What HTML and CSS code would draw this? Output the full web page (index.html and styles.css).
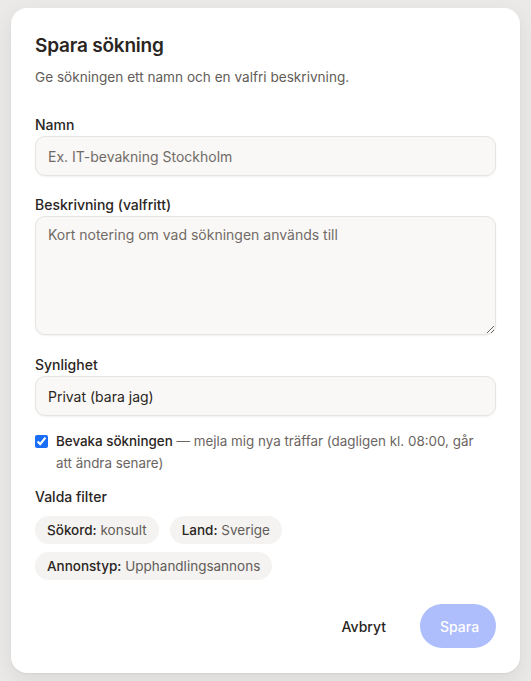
FILE: index.html
```html
<!DOCTYPE html>
<html lang="sv">
<head>
<meta charset="utf-8">
<title>Spara sökning</title>
<link rel="stylesheet" href="styles.css">
</head>
<body>
<div class="backdrop">
  <div class="dialog" role="dialog" aria-labelledby="dlg-title">
    <h2 id="dlg-title" class="title">Spara sökning</h2>
    <p class="subtitle">Ge sökningen ett namn och en valfri beskrivning.</p>

    <div class="field field-first">
      <label class="label" for="name">Namn</label>
      <input id="name" class="input" type="text" placeholder="Ex. IT-bevakning Stockholm">
    </div>

    <div class="field">
      <label class="label" for="desc">Beskrivning (valfritt)</label>
      <textarea id="desc" class="input textarea" placeholder="Kort notering om vad sökningen används till"></textarea>
    </div>

    <div class="field field-vis">
      <label class="label" for="vis">Synlighet</label>
      <select id="vis" class="input select">
        <option>Privat (bara jag)</option>
      </select>
    </div>

    <label class="check">
      <input type="checkbox" checked>
      <span class="check-text"><strong>Bevaka sökningen</strong> — mejla mig nya träffar (dagligen kl. 08:00, går att ändra senare)</span>
    </label>

    <div class="filters">
      <div class="label">Valda filter</div>
      <div class="chips">
        <span class="chip"><b>Sökord:</b> konsult</span>
        <span class="chip"><b>Land:</b> Sverige</span>
        <span class="chip"><b>Annonstyp:</b> Upphandlingsannons</span>
      </div>
    </div>

    <div class="actions">
      <button class="btn ghost" type="button">Avbryt</button>
      <button class="btn primary" type="button">Spara</button>
    </div>
  </div>
</div>
</body>
</html>
```

FILE: styles.css
```css
* { box-sizing: border-box; }
html, body { margin: 0; height: 100%; }
body {
  font-family: Inter, "Noto Sans", "Liberation Sans", sans-serif;
  color: #2a2522;
  background: #ebeae8;
}
.backdrop {
  min-height: 100%;
  padding: 8px 11px 9px;
  background: #ebeae8;
}
.dialog {
  width: 509px;
  background: #ffffff;
  border-radius: 16px;
  box-shadow: 0 1px 2px rgba(0,0,0,0.06), 0 8px 24px rgba(0,0,0,0.08);
  padding: 24px 24px 25px;
  display: flex;
  flex-direction: column;
}
.title {
  margin: 0;
  font-size: 19px;
  line-height: 28px;
  font-weight: 560;
  letter-spacing: -0.2px;
  color: #2a2522;
}
.subtitle {
  margin: 7px 0 0;
  font-size: 13.6px;
  line-height: 20px;
  color: #625c58;
}
.field {
  display: flex;
  flex-direction: column;
  margin-top: 19px;
}
.field-first { margin-top: 28px; }
.field-vis { margin-top: 20px; }
.label {
  font-size: 14px;
  line-height: 20px;
  font-weight: 460;
  color: #2a2522;
  margin-bottom: 1px;
}
.input {
  width: 100%;
  height: 40px;
  border: 1px solid #e7e4e0;
  border-radius: 10px;
  background: #f9f8f6;
  box-shadow: 0 1px 2px rgba(0,0,0,0.06);
  padding: 0 12px;
  font-family: inherit;
  font-size: 14px;
  color: #2a2522;
  outline: none;
}
.input::placeholder { color: #716b67; }
.textarea {
  height: 119px;
  padding: 8px 12px;
  line-height: 20px;
  resize: vertical;
}
.select {
  appearance: none;
  -webkit-appearance: none;
}
.check {
  display: flex;
  align-items: flex-start;
  gap: 8px;
  margin-top: 14px;
  font-size: 13.4px;
  line-height: 22px;
  color: #6b6561;
}
.check-text { max-width: 430px; }
.check input {
  margin: 5px 0 0;
  width: 13px;
  height: 13px;
  flex: none;
  accent-color: #1a6ef5;
}
.check strong { font-weight: 460; color: #2a2522; }
.filters {
  margin-top: 13px;
}
.filters .label { display: block; margin-bottom: 9px; }
.chips {
  display: flex;
  flex-wrap: wrap;
  gap: 8px 11px;
}
.chip {
  display: inline-flex;
  align-items: center;
  height: 28px;
  padding: 0 12px;
  border-radius: 14px;
  background: #f4f3f1;
  font-size: 13.5px;
  color: #625c58;
  white-space: pre;
}
.chip b { font-weight: 460; color: #2a2522; }
.actions {
  display: flex;
  justify-content: flex-end;
  align-items: center;
  gap: 18px;
  margin-top: 24px;
}
.btn {
  font-family: inherit;
  font-size: 14px;
  font-weight: 460;
  border: none;
  height: 44px;
  border-radius: 22px;
  padding: 0 16px;
  cursor: pointer;
}
.ghost {
  background: transparent;
  color: #2a2522;
}
.primary {
  background: #aebdfb;
  color: #ffffff;
  padding: 0 20px;
  width: 76px;
}
```
